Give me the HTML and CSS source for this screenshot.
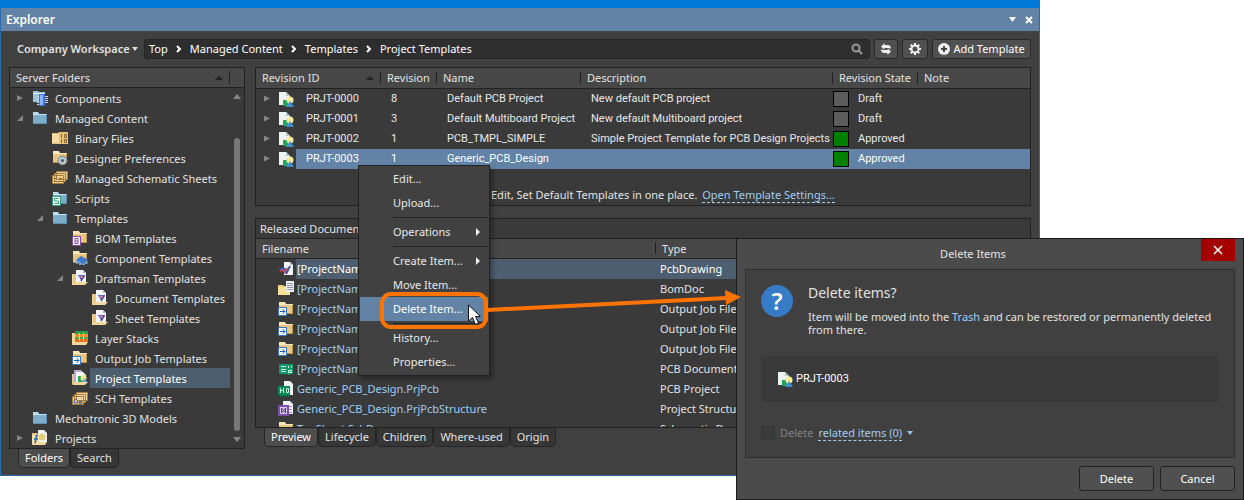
FILE: index.html
```html
<!DOCTYPE html>
<html lang="en">
<head>
  <meta charset="UTF-8" />
  <meta name="viewport" content="width=device-width, initial-scale=1.0"/>
  <title>Explorer</title>
  <link rel="stylesheet" href="styles.css">
</head>
<body>

  <!-- icon set -->
  <svg class="sprite" aria-hidden="true">
    <symbol id="i-folder" viewBox="0 0 16 16"><path d="M1 2h5l1 2h8v10H1z" fill="#7fadc9"/><path d="M1 2h5l1 2H1z" fill="#b9dcee"/><path d="M1 4.500h13" stroke="#c6e4f3"/><path d="M1 13.500h14M14.500 5v9" stroke="#5b8fb0"/></symbol>
    <symbol id="i-yfolder" viewBox="0 0 16 16"><path d="M1 2h6l1 1h7v10H1z" fill="#e7c583"/><path d="M1 1h6l1 2H1z" fill="#fbe6b5"/><path d="M1 3.500h14" stroke="#fbe8bd"/><path d="M1 12.500h14M14.500 4v9" stroke="#bd9550"/></symbol>
    <symbol id="i-components" viewBox="0 0 16 16"><path d="M1 1h5l1 1h6v10H1z" fill="#9cc2da"/><path d="M1 3.500h12" stroke="#e3f3fb"/><path d="M5 6.500h2M5 8.500h2M5 10.500h2M5 12.500h2M13 6.500h3M13 8.500h3M13 10.500h3M13 12.500h3M5 14.500h2" stroke="#c3d8ee"/><path d="M7 4h6v12H7z" fill="#3d74dc"/><path d="M8 5h3v10H8z" fill="#8ab2f8"/></symbol>
    <symbol id="i-binary" viewBox="0 0 16 16"><path d="M0 3h6l1-1h9v12H0z" fill="#e3c07c"/><path d="M0 4h7v9H0z" fill="#f5dca4"/><path d="M9.500 4v4M12.500 4.500h2v3h-2zM9.500 9v4M12.500 9.500h2v3h-2z" stroke="#8a6528" fill="none"/></symbol>
    <symbol id="i-prefs" viewBox="0 0 16 16"><use href="#i-yfolder"/><circle cx="10.500" cy="10.500" r="4.500" fill="#a5b1ba" stroke="#687782" stroke-dasharray="2 1"/><circle cx="10.500" cy="10.500" r="3.500" fill="#b9c6ce"/><circle cx="10.500" cy="10.500" r="1.500" fill="#4d5960"/></symbol>
    <symbol id="i-sheets" viewBox="0 0 16 16"><path d="M4.500 1.500h11v8h-11zM2.500 3.500h11v8h-11zM.5 5.500h11v8H.5z" fill="#eccf93" stroke="#a57c3c"/><path d="M2 8.500h3M2 11.500h3M7 8.500h3M7 11.500h3" stroke="#8a6528"/></symbol>
    <symbol id="i-scripts" viewBox="0 0 16 16"><use href="#i-folder"/><path d="M.5 6.500h8v9h-8z" fill="#fff" stroke="#2f9c75"/><path d="M6.500 8.500h-4v2.500h4v2.500h-4" stroke="#2f9c75" fill="none"/></symbol>
    <symbol id="i-bom" viewBox="0 0 16 16"><use href="#i-yfolder"/><path d="M.5 6.500h8v9h-8z" fill="#fff" stroke="#8a479f"/><path d="M3 8.500h3v5H3zM3 11h3" stroke="#8a479f" fill="none"/></symbol>
    <symbol id="i-comptpl" viewBox="0 0 16 16"><use href="#i-yfolder"/><path d="M5 11v3M8 12v3M12 12v3M14.500 11v3" stroke="#94a3b2" stroke-width="2"/><path d="M4 10l5-4 7 4-5 4z" fill="#3c78ce"/><path d="M4 10l7 4v1l-7-3z" fill="#72a5e8"/></symbol>
    <symbol id="i-draftsman" viewBox="0 0 16 16"><path d="M0 4h5v10H0z" fill="#e7c583"/><path d="M4 0h7l3 3v10H4z" fill="#f4f6ff"/><path d="M11 0v3h3" fill="#aab6dc"/><path d="M6 5h7v1.500H6z" fill="#6a5fc8"/><path d="M12 6L9 11M8 7l2 3" stroke="#4d44a8" stroke-width="1.500"/><path d="M11 7H7" stroke="#df6b6b"/><path d="M0 15l3-3h13l-3 3z" fill="#f2d79d"/><path d="M.5 5v10" stroke="#f2d79d"/></symbol>
    <symbol id="i-layers" viewBox="0 0 16 16"><path d="M0 3h4v12H0z" fill="#f2d79d"/><path d="M3 1h13v3H3z" fill="#2b9d45"/><path d="M3 4h13v3H3z" fill="#f58f2c"/><path d="M3 7h13v2H3z" fill="#53aa42"/><path d="M3 9h13v3H3z" fill="#e86f20"/><path d="M7.500 3v8M11.500 3v8" stroke="#ffd56a"/><path d="M0 15l3-3h13l-2 3z" fill="#f2d79d"/></symbol>
    <symbol id="i-output" viewBox="0 0 16 16"><use href="#i-yfolder"/><path d="M.5 6.500h8v8h-8z" fill="#fff" stroke="#3675bb"/><path d="M2 10.500h5M4.500 8L7 10.500 4.500 13" stroke="#1d58a8" fill="none"/></symbol>
    <symbol id="i-projtpl" viewBox="0 0 16 16"><path d="M0 4h4v10H0z" fill="#e7c583"/><path d="M2 0h7l2 2v10H2z" fill="#b7a8d4"/><path d="M4 2h7l3 3v8H4z" fill="#f5f8fb"/><path d="M6 6h5v6H6z" fill="#29a35e"/><circle cx="11.500" cy="8" r="3" fill="#f3e48a"/><path d="M12 8l4 5h-6z" fill="#5da5e0"/><path d="M0 15l3-3h13l-3 3z" fill="#f2d79d"/></symbol>
    <symbol id="i-sch" viewBox="0 0 16 16"><path d="M4.500 2.500h11v8h-11zM2.500 4.500h11v8h-11zM.5 6.500h11v8H.5z" fill="#f0d6a2" stroke="#a57c3c"/><path d="M2 13v-2l2-2 2 2v2zM7 11.500h3M7 13.500h3" stroke="#5270b8" fill="none"/></symbol>
    <symbol id="i-projects" viewBox="0 0 16 16"><path d="M0 3h5l1 1v11H0z" fill="#e7c583"/><path d="M6 0h6l3 3v9H6z" fill="#f0f3f5"/><circle cx="10" cy="7" r="3.500" fill="#e6cf7a"/><path d="M0 5h7v9H0z" fill="#f8e0a8"/><path d="M6 5.500H4.500L3 13.500M2 9h4" stroke="#2468bd" stroke-width="1.500" fill="none"/><path d="M1 15l4-3h10l-2 3z" fill="#f2d79d"/></symbol>
    <symbol id="i-item" viewBox="0 0 16 16"><path d="M1 1h7l4 4v9H1z" fill="#edf3f3"/><path d="M8 1v4h4" fill="#b4c8ca"/><path d="M5 9h5v6H5z" fill="#23a35d"/><circle cx="12" cy="9" r="3.500" fill="#f5ec98"/><path d="M12 10l4 6H8z" fill="#3e8ed0"/></symbol>
    <symbol id="i-drawing" viewBox="0 0 16 16"><path d="M6 1h6l3 3v10H6z" fill="#f3f5fb"/><path d="M12 1v3h3" fill="#b4bdd8"/><path d="M1 8h4M5 6l3 6M12 5L8 13M5 8.500h6" stroke="#4353b0" stroke-width="2"/><path d="M2 10l3-1 2 3M10 7l-3 3" stroke="#d85050" stroke-width="1.500" fill="none"/></symbol>
    <symbol id="i-bomdoc" viewBox="0 0 16 16"><path d="M0 4h5l1 1h6v9H0z" fill="#ead078"/><path d="M8 0h8v11H8z" fill="#eef0f4"/><path d="M9 2.500h6M9 4.500h6M9 6.500h6M9 8.500h6" stroke="#9099ac"/><path d="M0 6h8v5h4v3H0z" fill="#f4e098"/></symbol>
    <symbol id="i-pcb" viewBox="0 0 16 16"><path d="M1 3h14v10h-3v1h-2v-1H1z" fill="#14996b"/><path d="M3 5.500h5M3 8.500h5M3 10.500h5M10.500 5v2M13.500 5v2M10.500 9.500h3v2h-3z" stroke="#d7fff0" fill="none"/></symbol>
    <symbol id="i-prjpcb" viewBox="0 0 16 16"><path d="M6 0h6l3 3v11H6z" fill="#eef4f1"/><path d="M0 5h12v9H0z" fill="#11875c"/><path d="M2.500 7v5M2 9.500h3M5.500 7v5M8.500 7.500h2v4h-2z" stroke="#b8f0d8" fill="none"/><path d="M2 14.500h10" stroke="#11875c" stroke-width="2" stroke-dasharray="1 1"/></symbol>
    <symbol id="i-structure" viewBox="0 0 16 16"><path d="M5 0h7l3 3v10H5z" fill="#eef0f7"/><path d="M11 5.500h3M11 8.500h3M11 11.500h3" stroke="#9993bb"/><path d="M1 5h9v9H1z" fill="#d9c9ea" stroke="#7a50a8" stroke-width="2"/><path d="M3.500 7v5M3.500 7l4 5M7.500 7v5M7.500 7l-4 5" stroke="#61368f"/></symbol>
  </svg>

  <div class="window">
    <div class="window-strip"></div>
    <header class="titlebar">
      <h1>Explorer</h1>
      <button class="title-btn" aria-label="Panel options"><svg viewBox="0 0 8 8"><path d="M0 1h7L3.500 6z" fill="#fff"/></svg></button>
      <button class="title-btn" aria-label="Close panel"><svg viewBox="0 0 8 8"><path d="M1 1l6 6M7 1L1 7" stroke="#fff" stroke-width="2"/></svg></button>
    </header>

    <div class="toolbar">
      <button class="workspace">Company Workspace <svg viewBox="0 0 6 4"><path d="M0 0h6L3 4z" fill="#ddd"/></svg></button>
      <nav class="breadcrumb" aria-label="Path">
        <a href="#">Top</a><svg class="chev" viewBox="0 0 6 8"><path d="M1 1l3 3-3 3" /></svg>
        <a href="#">Managed Content</a><svg class="chev" viewBox="0 0 6 8"><path d="M1 1l3 3-3 3" /></svg>
        <a href="#">Templates</a><svg class="chev" viewBox="0 0 6 8"><path d="M1 1l3 3-3 3" /></svg>
        <a href="#">Project Templates</a>
        <button class="search" aria-label="Find"><svg viewBox="0 0 12 12"><circle cx="5" cy="5" r="3.500" fill="none" stroke="#999" stroke-width="2"/><path d="M7.500 7.500L11 11" stroke="#999" stroke-width="2"/></svg></button>
      </nav>
      <button class="tool-btn" aria-label="Refresh"><svg viewBox="0 0 12 12"><path d="M1 3.500L4.500 0v2h3C10 2 11 3.500 11 6 10 5 9 5 7.500 5h-3v2zM11 8.500L7.500 12v-2h-3C2 10 1 8.500 1 6c1 1 2 1 3.500 1h3V5z" fill="#ececec"/><path d="M4 6.500l4-1" stroke="#505050"/></svg></button>
      <button class="tool-btn gear" aria-label="Settings"><svg viewBox="0 0 12 12"><circle cx="6" cy="6" r="3.500" fill="none" stroke="#f0f0f0" stroke-width="2"/><path d="M6 0v2M6 10v2M0 6h2M10 6h2M1.700 1.700l1.500 1.500M8.800 8.800l1.500 1.500M10.300 1.700L8.800 3.200M3.200 8.800l-1.500 1.500" stroke="#f0f0f0" stroke-width="2"/></svg></button>
      <button class="tool-btn add"><svg viewBox="0 0 12 12"><circle cx="6" cy="6" r="6" fill="#f0f0f0"/><path d="M6 3v6M3 6h6" stroke="#444" stroke-width="2"/></svg>Add Template</button>
    </div>

    <main class="columns">
      <section class="side">
        <div class="panel">
          <div class="panel-head">Server Folders <span class="sort"></span></div>
          <div class="tree-wrap">
            <ul class="tree">
              <li class="closed"><svg class="icon"><use href="#i-components"/></svg><span>Components</span></li>
              <li class="open"><svg class="icon"><use href="#i-folder"/></svg><span>Managed Content</span></li>
              <li class="lvl2"><svg class="icon"><use href="#i-binary"/></svg><span>Binary Files</span></li>
              <li class="lvl2"><svg class="icon"><use href="#i-prefs"/></svg><span>Designer Preferences</span></li>
              <li class="lvl2"><svg class="icon"><use href="#i-sheets"/></svg><span>Managed Schematic Sheets</span></li>
              <li class="lvl2"><svg class="icon"><use href="#i-scripts"/></svg><span>Scripts</span></li>
              <li class="lvl2 open"><svg class="icon"><use href="#i-folder"/></svg><span>Templates</span></li>
              <li class="lvl3"><svg class="icon"><use href="#i-bom"/></svg><span>BOM Templates</span></li>
              <li class="lvl3"><svg class="icon"><use href="#i-comptpl"/></svg><span>Component Templates</span></li>
              <li class="lvl3 open"><svg class="icon"><use href="#i-draftsman"/></svg><span>Draftsman Templates</span></li>
              <li class="lvl4"><svg class="icon"><use href="#i-draftsman"/></svg><span>Document Templates</span></li>
              <li class="lvl4"><svg class="icon"><use href="#i-draftsman"/></svg><span>Sheet Templates</span></li>
              <li class="lvl3"><svg class="icon"><use href="#i-layers"/></svg><span>Layer Stacks</span></li>
              <li class="lvl3"><svg class="icon"><use href="#i-output"/></svg><span>Output Job Templates</span></li>
              <li class="lvl3 current"><svg class="icon"><use href="#i-projtpl"/></svg><span>Project Templates</span></li>
              <li class="lvl3"><svg class="icon"><use href="#i-sch"/></svg><span>SCH Templates</span></li>
              <li><svg class="icon"><use href="#i-folder"/></svg><span>Mechatronic 3D Models</span></li>
              <li class="closed"><svg class="icon"><use href="#i-projects"/></svg><span>Projects</span></li>
            </ul>
            <div class="scrollbar"><i class="up"></i><b></b><i class="down"></i></div>
          </div>
        </div>
        <div class="tabs">
          <button class="active">Folders</button><button>Search</button>
        </div>
      </section>

      <section class="content">
        <div class="panel">
          <table class="revisions">
            <colgroup><col class="c-id"><col class="c-rev"><col class="c-name"><col class="c-desc"><col class="c-state"><col></colgroup>
            <thead>
              <tr><th><div class="head-cell">Revision ID <span class="sort"></span></div></th><th>Revision</th><th>Name</th><th>Description</th><th>Revision State</th><th>Note</th></tr>
            </thead>
            <tbody>
              <tr><td><div class="id-cell"><svg class="icon"><use href="#i-item"/></svg><span>PRJT-0000</span></div></td><td>8</td><td>Default PCB Project</td><td>New default PCB project</td><td><div class="state draft">Draft</div></td><td></td></tr>
              <tr><td><div class="id-cell"><svg class="icon"><use href="#i-item"/></svg><span>PRJT-0001</span></div></td><td>3</td><td>Default Multiboard Project</td><td>New default Multiboard project</td><td><div class="state draft">Draft</div></td><td></td></tr>
              <tr><td><div class="id-cell"><svg class="icon"><use href="#i-item"/></svg><span>PRJT-0002</span></div></td><td>1</td><td>PCB_TMPL_SIMPLE</td><td>Simple Project Template for PCB Design Projects</td><td><div class="state approved">Approved</div></td><td></td></tr>
              <tr class="selected"><td><div class="id-cell"><svg class="icon"><use href="#i-item"/></svg><span>PRJT-0003</span></div></td><td>1</td><td>Generic_PCB_Design</td><td></td><td><div class="state approved">Approved</div></td><td></td></tr>
            </tbody>
          </table>
          <p class="hint">Edit, Set Default Templates in one place. <a href="#">Open Template Settings...</a></p>
        </div>

        <div class="panel released">
          <h2>Released Documen</h2>
          <table class="files">
            <colgroup><col class="c-file"><col></colgroup>
            <thead><tr><th>Filename</th><th>Type</th></tr></thead>
            <tbody>
              <tr class="selected"><td><div class="file-cell"><svg class="icon"><use href="#i-drawing"/></svg><a href="#">[ProjectNam</a></div></td><td>PcbDrawing</td></tr>
              <tr><td><div class="file-cell"><svg class="icon"><use href="#i-bomdoc"/></svg><a href="#">[ProjectNam</a></div></td><td>BomDoc</td></tr>
              <tr><td><div class="file-cell"><svg class="icon"><use href="#i-output"/></svg><a href="#">[ProjectNam</a></div></td><td>Output Job File</td></tr>
              <tr><td><div class="file-cell"><svg class="icon"><use href="#i-output"/></svg><a href="#">[ProjectNam</a></div></td><td>Output Job File</td></tr>
              <tr><td><div class="file-cell"><svg class="icon"><use href="#i-output"/></svg><a href="#">[ProjectNam</a></div></td><td>Output Job File</td></tr>
              <tr><td><div class="file-cell"><svg class="icon"><use href="#i-pcb"/></svg><a href="#">[ProjectNam</a></div></td><td>PCB Document</td></tr>
              <tr><td><div class="file-cell"><svg class="icon"><use href="#i-prjpcb"/></svg><a href="#">Generic_PCB_Design.PrjPcb</a></div></td><td>PCB Project</td></tr>
              <tr><td><div class="file-cell"><svg class="icon"><use href="#i-structure"/></svg><a href="#">Generic_PCB_Design.PrjPcbStructure</a></div></td><td>Project Structure</td></tr>
              <tr><td><div class="file-cell"><svg class="icon"><use href="#i-yfolder"/></svg><a href="#">TopSheet.SchDoc</a></div></td><td>Schematic Document</td></tr>
            </tbody>
          </table>
        </div>
        <div class="tabs">
          <button class="active">Preview</button><button>Lifecycle</button><button>Children</button><button>Where-used</button><button>Origin</button>
        </div>
      </section>
    </main>
  </div>

  <div class="menu" role="menu">
    <button role="menuitem">Edit...</button>
    <button role="menuitem">Upload...</button>
    <hr>
    <button role="menuitem" class="more">Operations</button>
    <hr>
    <button role="menuitem" class="more">Create Item...</button>
    <button role="menuitem">Move Item...</button>
    <button role="menuitem" class="hover">Delete Item...</button>
    <hr>
    <button role="menuitem">History...</button>
    <button role="menuitem">Properties...</button>
  </div>

  <div class="dialog" role="dialog" aria-labelledby="dlg-title">
    <div class="dialog-title">
      <span id="dlg-title">Delete Items</span>
      <button class="close" aria-label="Close"><svg viewBox="0 0 10 10"><path d="M1 1l8 8M9 1L1 9" stroke="#fff" stroke-width="1.500"/></svg></button>
    </div>
    <div class="dialog-body">
      <div class="message">
        <span class="question">?</span>
        <div>
          <h3>Delete items?</h3>
          <p>Item will be moved into the <a href="#">Trash</a> and can be restored or permanently deleted from there.</p>
        </div>
      </div>
      <div class="item-box"><svg class="icon"><use href="#i-item"/></svg>PRJT-0003</div>
      <div class="related">
        <input type="checkbox" id="related" disabled>
        <label for="related">Delete</label>
        <a href="#">related items (0)</a>
        <svg viewBox="0 0 6 4"><path d="M0 0h6L3 4z" fill="#8fc3f0"/></svg>
      </div>
    </div>
    <div class="dialog-actions">
      <button>Delete</button>
      <button>Cancel</button>
    </div>
  </div>

  <!-- callout from the menu item to the dialog -->
  <svg class="callout" viewBox="0 0 370 50" aria-hidden="true">
    <rect x="4" y="6" width="104" height="33" rx="9" fill="none" stroke="#ff7300" stroke-width="4"/>
    <path d="M109 22l240-12" stroke="#ff7300" stroke-width="4"/>
    <path d="M347 2l16 7-15 8z" fill="#ff7300"/>
    <path d="M90.500 17v16l4-3.500 3 7 3-1.500-3-6.500h5z" fill="#fff" stroke="#111"/>
  </svg>
</body>
</html>
```

FILE: styles.css
```css
* {
  box-sizing: border-box;
}

body {
  margin: 0;
  min-height: 100vh;
  position: relative;
  background: #fff;
  color: #e2e2e2;
  font-family: "Noto Sans", "Open Sans", sans-serif;
  font-size: 11px;
  line-height: 20px;
}

button {
  font: inherit;
  color: inherit;
  padding: 0;
  border: 0;
  background: none;
}

a {
  color: #9fcdf5;
  text-decoration: none;
}

h1, h2, h3, p {
  margin: 0;
  font-size: inherit;
  font-weight: normal;
}

.sprite {
  position: absolute;
  width: 0;
  height: 0;
}

.icon {
  width: 16px;
  height: 16px;
  flex: none;
}

/* explorer window */
.window {
  margin-right: 204px;
  background: #404040;
  border: 1px solid #2a6cab;
  border-top: 0;
}

.window-strip {
  height: 8px;
  margin: 0 -1px;
  background: #0078d7;
}

.titlebar {
  display: flex;
  align-items: center;
  gap: 8px;
  height: 23px;
  padding: 0 6px 0 5px;
  background: #6283a5;
  color: #fff;
}

.titlebar h1 {
  flex: 1;
  font-size: 12px;
  font-weight: 600;
}

.title-btn {
  width: 8px;
  height: 8px;
}

.title-btn svg {
  display: block;
}

.toolbar {
  display: flex;
  gap: 4px;
  padding: 8px 8px 8px 16px;
}

.workspace {
  display: flex;
  align-items: center;
  gap: 2px;
  width: 123px;
  font-weight: 600;
  white-space: nowrap;
}

.workspace svg {
  width: 6px;
  height: 4px;
}

.breadcrumb {
  flex: 1;
  display: flex;
  align-items: center;
  gap: 8px;
  height: 20px;
  padding: 0 6px 0 4px;
  background: #2e2e2e;
  border: 1px solid #252525;
  border-radius: 3px;
}

.breadcrumb a {
  color: #fff;
}

.chev {
  width: 6px;
  height: 8px;
  fill: none;
  stroke: #fff;
  stroke-width: 2;
}

.search {
  display: flex;
  margin-left: auto;
}

.search svg,
.tool-btn svg {
  width: 12px;
  height: 12px;
}

.tool-btn {
  display: flex;
  align-items: center;
  justify-content: center;
  gap: 3px;
  width: 24px;
  height: 20px;
  background: #505050;
  border: 1px solid #292929;
  border-radius: 3px;
}

.tool-btn.gear {
  width: 26px;
}

.tool-btn.add {
  width: 99px;
  color: #fff;
  white-space: nowrap;
}

.columns {
  display: grid;
  grid-template-columns: 236px 1fr;
  gap: 10px;
  padding: 0 8px;
}

.panel {
  background: #3a3a3a;
  border: 1px solid #222;
}

.panel-head {
  display: flex;
  align-items: center;
  height: 20px;
  padding: 0 14px 0 6px;
  background: #474747;
  border-bottom: 1px solid #222;
}

.sort {
  display: flex;
  align-items: center;
  width: 15px;
  height: 13px;
  margin-left: auto;
  border-right: 1px solid #222;
}

.sort::before {
  content: "";
  border: 4px solid transparent;
  border-top: 0;
  border-bottom-color: #222;
}

/* folder tree */
.tree-wrap {
  display: flex;
}

.tree {
  flex: 1;
  min-width: 0;
  margin: 0;
  padding: 0;
  list-style: none;
}

.tree li {
  display: flex;
  align-items: center;
  height: 20px;
  padding-left: 7px;
  line-height: 22px;
  white-space: nowrap;
}

.tree li::before {
  content: "";
  width: 6px;
  height: 6px;
  margin-right: 9px;
}

.tree li.closed::before {
  background: #858585;
  clip-path: polygon(0 0, 100% 50%, 0 100%);
}

.tree li.open::before {
  background: #858585;
  clip-path: polygon(100% 0, 100% 100%, 0 100%);
}

.tree li.lvl2 {
  padding-left: 27px;
}

.tree li.lvl3 {
  padding-left: 47px;
}

.tree li.lvl4 {
  padding-left: 67px;
}

.tree span {
  flex: 1;
  height: 20px;
  margin-left: 2px;
  padding-left: 5px;
}

.tree .current span {
  background: #4d5e6f;
  color: #fff;
}

.scrollbar {
  width: 14px;
  display: flex;
  flex-direction: column;
  align-items: center;
  padding: 6px 0;
}

.scrollbar b {
  flex: 1;
  width: 6px;
  margin: 39px 0 6px;
  border-radius: 3px;
  background: #777;
}

.scrollbar i {
  border: 4px solid transparent;
}

.scrollbar .up {
  border-top: 0;
  border-bottom: 5px solid #858585;
}

.scrollbar .down {
  border-bottom: 0;
  border-top: 5px solid #858585;
}

/* bottom tabs */
.tabs {
  display: flex;
  padding-left: 9px;
}

.tabs button {
  height: 19px;
  padding: 0 6px;
  background: #363636;
  border: 1px solid #252525;
  border-top: 0;
  border-radius: 0 0 5px 5px;
  line-height: 18px;
}

.tabs .active {
  background: #4d4d4d;
  color: #fff;
}

.side {
  padding-bottom: 7px;
}

.content {
  display: flex;
  flex-direction: column;
  min-width: 0;
  padding-bottom: 28px;
}

/* tables */
table {
  width: 100%;
  table-layout: fixed;
  border-collapse: collapse;
}

th, td {
  height: 20px;
  padding: 0;
  text-align: left;
  font-weight: normal;
  white-space: nowrap;
}

th {
  padding-left: 6px;
  background: linear-gradient(#222, #222) no-repeat 100% 50% / 1px 12px #474747;
  border-bottom: 1px solid #222;
  line-height: 19px;
}

th:last-child {
  background: #474747;
}

.head-cell {
  display: flex;
  align-items: center;
}

.head-cell .sort {
  border-right: 0;
}

.c-id {
  width: 125px;
}

.c-rev {
  width: 56px;
}

.c-name {
  width: 144px;
}

.c-desc {
  width: 252px;
}

.c-state {
  width: 85px;
}

.revisions tbody {
  font-family: Roboto, Arial, sans-serif;
  color: #e8e8e8;
}

.revisions td {
  padding-left: 10px;
}

.revisions td:first-child,
.revisions td:nth-child(5) {
  padding-left: 0;
}

.id-cell {
  display: flex;
  align-items: center;
  padding-left: 8px;
}

.id-cell::before {
  content: "";
  width: 6px;
  height: 6px;
  margin-right: 8px;
  background: #858585;
  clip-path: polygon(0 0, 100% 50%, 0 100%);
}

.id-cell span {
  flex: 1;
  margin-left: 2px;
  padding-left: 10px;
}

.state {
  display: flex;
  align-items: center;
  gap: 9px;
}

.state::before {
  content: "";
  width: 14px;
  height: 14px;
  border: 1px solid #000;
  background: #5c5c5c;
}

.state.approved::before {
  background: #008000;
}

.revisions .selected td,
.revisions .selected span {
  background: #6283a5;
  color: #fff;
}

.revisions .selected td:first-child {
  background: none;
}

.hint {
  padding: 16px 0 0 235px;
  white-space: nowrap;
}

.hint a {
  margin-left: 2px;
}

.hint a,
.related a {
  display: inline-block;
  line-height: 15px;
  border-bottom: 1px dashed #9fcdf5;
}

.released {
  flex: 1 1 0;
  min-height: 0;
  margin-top: 12px;
  overflow: hidden;
}

.released h2 {
  height: 20px;
  padding-left: 4px;
  border-bottom: 1px solid #222;
  line-height: 19px;
}

.c-file {
  width: 400px;
}

.files td {
  padding-left: 4px;
}

.files td:first-child {
  padding-left: 0;
}

.file-cell {
  display: flex;
  align-items: center;
  padding-left: 22px;
}

.file-cell a {
  flex: 1;
  margin-left: 2px;
  padding-left: 1px;
}

.files .selected td,
.files .selected a {
  background: #4d5e6f;
  color: #fff;
}

.files .selected td:first-child {
  background: none;
}

/* context menu */
.menu {
  position: absolute;
  left: 358px;
  top: 165px;
  width: 132px;
  padding: 1px;
  background: #414141;
  border: 1px solid #222;
  box-shadow: 3px 3px 4px rgba(0, 0, 0, 0.3);
}

.menu button {
  display: flex;
  align-items: center;
  width: 100%;
  height: 24px;
  padding: 0 8px 0 33px;
  color: #e8e8e8;
  white-space: nowrap;
}

.menu .hover {
  background: #6283a5;
  color: #fff;
}

.menu .more::after {
  content: "";
  margin-left: auto;
  border: 4px solid transparent;
  border-right: 0;
  border-left-color: #eee;
}

.menu hr {
  height: 1px;
  margin: 2px 0 2px 33px;
  border: 0;
  background: #222;
}

/* delete dialog */
.dialog {
  position: absolute;
  right: 0;
  top: 238px;
  width: 508px;
  padding: 0 8px 8px;
  background: #4b4b4b;
  border: 1px solid #1c1c1c;
}

.dialog-title {
  display: flex;
  text-align: center;
  line-height: 30px;
}

.dialog-title span {
  flex: 1;
}

.close {
  width: 34px;
  height: 22px;
  background: #a40000;
  line-height: 0;
}

.close svg {
  width: 10px;
  height: 10px;
}

.dialog-body {
  padding: 15px 15px 16px;
  background: #404040;
  border: 1px solid #303030;
}

.message {
  display: flex;
  gap: 15px;
}

.question {
  flex: none;
  width: 32px;
  height: 32px;
  border-radius: 50%;
  background: #367bc6;
  color: #fff;
  font-size: 24px;
  font-weight: 600;
  line-height: 32px;
  text-align: center;
}

.message h3 {
  font-size: 14px;
  line-height: 16px;
}

.message p {
  margin-top: 9px;
  line-height: 13px;
}

.item-box {
  display: flex;
  align-items: center;
  gap: 3px;
  height: 46px;
  margin: 20px 0 23px;
  padding: 0 16px;
  background: #3a3a3a;
  border-radius: 3px;
  color: #fff;
  font-family: Roboto, Arial, sans-serif;
}

.related {
  display: flex;
  align-items: center;
  gap: 5px;
  height: 16px;
}

.related input {
  appearance: none;
  width: 14px;
  height: 14px;
  margin: 0;
  background: #3a3a3a;
  border: 1px solid #363636;
}

.related label {
  color: #808080;
}

.related svg {
  width: 6px;
  height: 4px;
}

.dialog-actions {
  display: flex;
  justify-content: flex-end;
  gap: 6px;
  padding-top: 8px;
}

.dialog-actions button {
  width: 75px;
  height: 25px;
  background: #505050;
  border: 1px solid #222;
  border-radius: 3px;
  color: #fff;
}

/* callout */
.callout {
  position: absolute;
  left: 378px;
  top: 288px;
  width: 370px;
  height: 50px;
}
```
